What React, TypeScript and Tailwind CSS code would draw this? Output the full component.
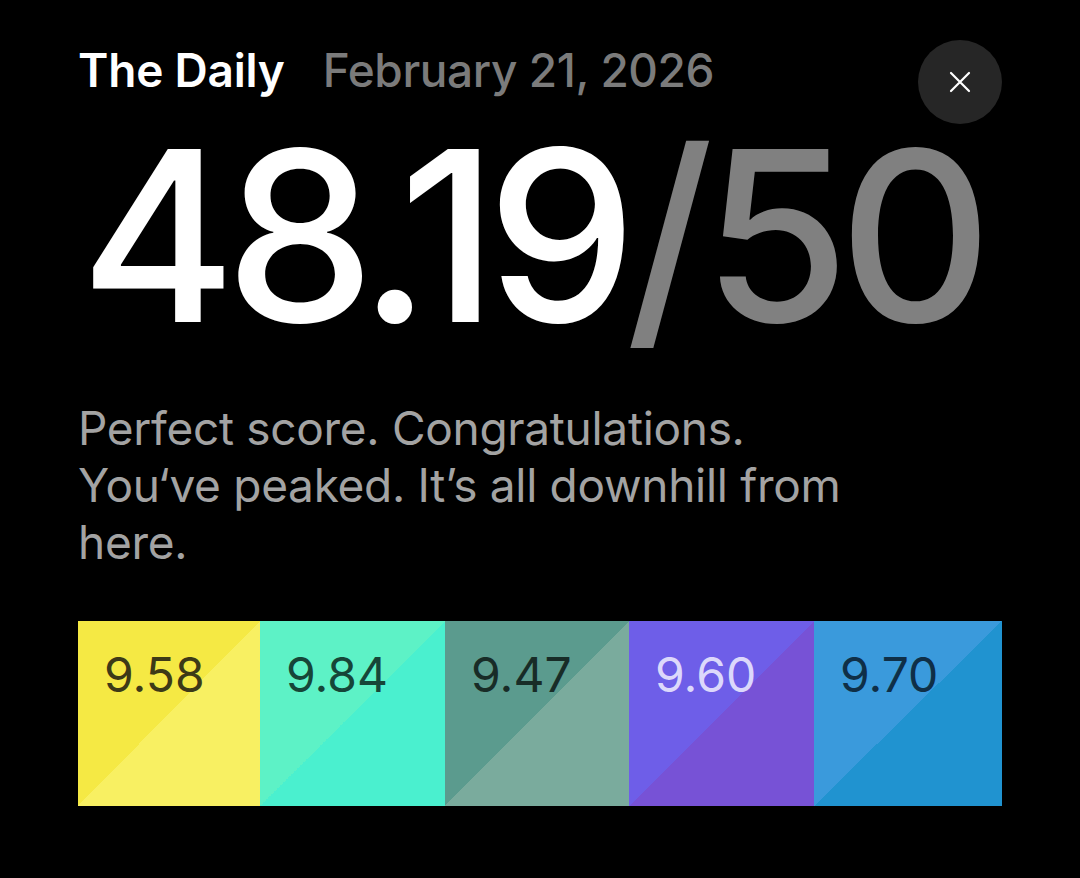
import React from "react";

const tiles = [
  { v: "9.58", bg: "bg-[linear-gradient(to_bottom_right,#f5e944_50%,#f8f062_50%)]", fg: "text-[#3d3a17]" },
  { v: "9.84", bg: "bg-[linear-gradient(to_bottom_right,#5df2c6_50%,#4af0cf_50%)]", fg: "text-[#164638]" },
  { v: "9.47", bg: "bg-[linear-gradient(to_bottom_right,#5b9b8e_50%,#7aab9d_50%)]", fg: "text-[#182c27]" },
  { v: "9.60", bg: "bg-[linear-gradient(to_bottom_right,#6e5ee8_50%,#7752d6_50%)]", fg: "text-[#dcd8fb]" },
  { v: "9.70", bg: "bg-[linear-gradient(to_bottom_right,#3a9adc_50%,#2093d0_50%)]", fg: "text-[#0f2f47]" },
];

export default function App() {
  return (
    <div
      className="w-[1080px] h-[878px] bg-black px-[78px] pt-[40px] overflow-hidden"
      style={{ fontFamily: "Inter, 'Noto Sans', sans-serif" }}
    >
      <div className="flex items-start justify-between">
        <div className="flex items-baseline gap-[38px] pt-[2px]">
          <span className="text-[46px] leading-[56px] font-semibold text-white tracking-[-0.2px]">The Daily</span>
          <span className="text-[46px] leading-[56px] font-medium text-[#7b7b7b] tracking-[-0.4px]">February 21, 2026</span>
        </div>
        <button className="w-[84px] h-[84px] rounded-full bg-[#262626] flex items-center justify-center">
          <svg width="22" height="22" viewBox="0 0 22 22" fill="none" stroke="white" strokeWidth="2.2" strokeLinecap="round">
            <path d="M2 2 L20 20 M20 2 L2 20" />
          </svg>
        </button>
      </div>
      <div className="mt-[-8px] text-[238px] leading-[238px] font-medium tracking-[-11px] pl-[2px] whitespace-nowrap">
        <span className="text-white">48.19</span>
        <span className="text-[#808080]">/50</span>
      </div>
      <p className="mt-[46px] w-[790px] text-[46px] leading-[57px] text-[#a3a3a3] tracking-[-0.3px]">
        Perfect score. Congratulations. You‘ve peaked. It’s all downhill from here.
      </p>
      <div className="mt-[50px] grid grid-cols-[182px_185px_184px_185px_188px]">
        {tiles.map((t) => (
          <div key={t.v} className={`h-[185px] ${t.bg} pl-[26px] pt-[22px]`}>
            <span className={`text-[48px] leading-[64px] ${t.fg}`}>{t.v}</span>
          </div>
        ))}
      </div>
    </div>
  );
}
